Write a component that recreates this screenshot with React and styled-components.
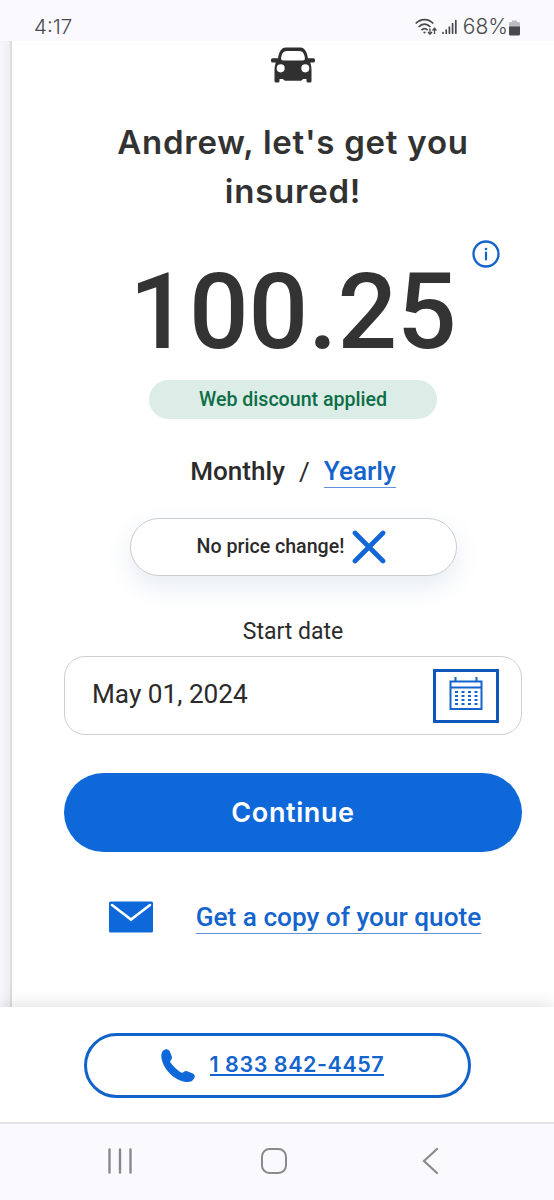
// App.jsx

import React from 'react';
import styled, { createGlobalStyle } from 'styled-components';

const GlobalStyle = createGlobalStyle`
  * { box-sizing: border-box; }
  body {
    margin: 0;
    background: #fff;
    font-family: Roboto, sans-serif;
    color: #2b2b2b;
  }
`;

const Screen = styled.div`
  display: flex;
  flex-direction: column;
  width: 554px;
  height: 1200px;
  overflow: hidden;
  background: #fff;
`;

const StatusBar = styled.header`
  flex: 0 0 41px;
  display: flex;
  justify-content: space-between;
  align-items: flex-start;
  padding: 14px 34px 0 34px;
  background: #f9f9fe;
  color: #4a4a4c;
  font-size: 20.5px;
  line-height: 26px;
`;

const Clock = styled.span`
  font-family: Inter, sans-serif;
  font-weight: 300;
`;

const StatusIcons = styled.div`
  display: flex;
  align-items: center;
  gap: 5px;
`;

const Percent = styled.span`
  font-family: Inter, sans-serif;
  font-size: 21px;
  font-weight: 300;
  margin: 0 -4px 0 1px;
`;

const Main = styled.div`
  flex: 0 0 966px;
  display: flex;
`;

const Gutter = styled.div`
  flex: 0 0 12px;
  background: linear-gradient(90deg, #f6f7fb, #eeeff3);
  border-right: 2px solid #dcdcde;
`;

const Quote = styled.main`
  flex: 1;
  display: flex;
  flex-direction: column;
  align-items: center;
  padding: 6px 32px 0 52px;
`;

const Title = styled.h1`
  margin: 35px 0 0;
  font-family: Inter, sans-serif;
  font-size: 33px;
  font-weight: 600;
  letter-spacing: 0.75px;
  line-height: 49px;
  text-align: center;
  color: #323232;
`;

const PriceRow = styled.div`
  position: relative;
  align-self: stretch;
  height: 112px;
  margin-top: 41px;
  text-align: center;
`;

const Price = styled.div`
  font-size: 105px;
  font-weight: 500;
  line-height: 112px;
  color: #333;
`;

const InfoIcon = styled.svg`
  position: absolute;
  top: -17px;
  right: 22px;
`;

const Discount = styled.div`
  width: 288px;
  height: 39px;
  margin-top: 11px;
  border-radius: 20px;
  background: #dcece7;
  color: #0d6e47;
  font-size: 19.6px;
  font-weight: 500;
  line-height: 39px;
  text-align: center;
`;

const Period = styled.div`
  display: flex;
  gap: 14px;
  margin-top: 36px;
  font-size: 26.1px;
  line-height: 32px;
`;

const Medium = styled.span`
  font-weight: 500;
`;

const Link = styled.a`
  height: 33px;
  border-bottom: 1px solid #5f93dc;
  color: #1464cd;
  font-size: 26.2px;
  font-weight: 500;
  line-height: 32px;
`;

const Notice = styled.div`
  display: flex;
  align-items: center;
  justify-content: center;
  gap: 8px;
  width: 327px;
  height: 58px;
  margin-top: 30px;
  padding-right: 3px;
  border: 1px solid #cdcdd0;
  border-radius: 29px;
  background: #fff;
  box-shadow: 0 10px 26px rgba(40, 95, 150, 0.12);
  font-size: 19.6px;
  font-weight: 500;
`;

const NoticeText = styled.span`
  padding-bottom: 1px;
`;

const Label = styled.label`
  margin-top: 42px;
  font-size: 23px;
  line-height: 28px;
`;

const DateField = styled.div`
  align-self: stretch;
  display: flex;
  align-items: center;
  justify-content: space-between;
  height: 79px;
  margin-top: 10px;
  padding: 0 22px 0 27px;
  border: 1px solid #cfcfcf;
  border-radius: 21px;
`;

const DateValue = styled.span`
  padding-bottom: 4px;
  font-size: 26.2px;
`;

const CalendarButton = styled.button`
  display: flex;
  align-items: flex-start;
  justify-content: center;
  width: 66px;
  height: 54px;
  padding: 5px 0 0;
  border: 3px solid #0f57b8;
  background: #fff;
`;

const Continue = styled.button`
  align-self: stretch;
  height: 79px;
  margin-top: 38px;
  padding: 0;
  border: none;
  border-radius: 40px;
  background: #0f68d9;
  color: #fff;
  font-family: Inter, sans-serif;
  font-size: 27px;
  font-weight: 600;
  letter-spacing: 0.6px;
`;

const CopyRow = styled.div`
  display: flex;
  gap: 43px;
  margin: 49px 0 0 4px;
`;

const CallBar = styled.section`
  flex: 0 0 115px;
  display: flex;
  justify-content: center;
  align-items: flex-start;
  padding: 26px 0 0;
  background: #fff;
  box-shadow: 0 -2px 16px rgba(0, 0, 0, 0.12);
`;

const CallButton = styled.a`
  display: flex;
  gap: 15px;
  width: 387px;
  height: 65px;
  padding: 13px 0 0 74px;
  border: 3px solid #1263c9;
  border-radius: 33px;
  color: #1464cd;
`;

const PhoneNumber = styled.span`
  height: 27px;
  border-bottom: 2px solid #1464cd;
  font-family: Inter, sans-serif;
  font-size: 21.5px;
  font-weight: 600;
  letter-spacing: 0.55px;
  line-height: 30px;
`;

const NavBar = styled.nav`
  flex: 1;
  display: flex;
  align-items: center;
  justify-content: space-between;
  padding: 0 115px 2px 107px;
  border-top: 2px solid #e2e2e8;
  background: #f9f9fe;
`;

const HomeIcon = styled.svg`
  margin-right: 7px;
`;

const CarIcon = () => (
  <svg width="44" height="36" viewBox="0 0 44 35" fill="#303030" preserveAspectRatio="none">
    <path
      fillRule="evenodd"
      d="M14.500.5h15c4 0 6.500 4 7.500 10.500h5.500a1.500 1.500 0 0 1 1.500 1.500v1a1.500 1.500 0 0 1-1.500 1.500h-3.300c1 2.500 1.300 5 1.300 8v10a1.500 1.500 0 0 1-1.500 1.500h-2a1.500 1.500 0 0 1-1.500-1.500V31h-3.500c-1 1.500-2 1.700-3.500 1.700h-13c-1.500 0-2.500-.2-3.500-1.700H8.500v2A1.500 1.500 0 0 1 7 34.500H5A1.500 1.500 0 0 1 3.500 33V23c0-3 .3-5.500 1.300-8H1.500A1.500 1.500 0 0 1 0 13.500v-1A1.500 1.500 0 0 1 1.500 11H7C8 4.500 10.500.5 14.500.5zM15.500 4C12.500 4 11 6 10.200 10c-.4 2 .2 3.200 2.200 3.200h19.200c2 0 2.600-1.200 2.200-3.200C33 6 31.500 4 28.500 4zM9.700 16.700a4 4 0 1 0 0 8 4 4 0 0 0 0-8zm24.600 0a4 4 0 1 0 0 8 4 4 0 0 0 0-8z"
    />
  </svg>
);

const WifiIcon = () => (
  <svg width="22" height="18" viewBox="0 0 22 18" fill="none" stroke="#4a4a4c" strokeWidth="1.7">
    <path d="M.7 5.500C5.500.2 13.500.2 18.300 5.500M3.600 9C7 5.200 12 5.200 15.400 9M6.400 12.200c2-2 4.200-2 6.200 0" />
    <circle cx="9.500" cy="14.500" r="1.100" fill="#4a4a4c" stroke="none" />
    <path d="M15 10.500v5.500m-2-2 2 2.200 2-2.200M19.500 16v-5.500m-2 2 2-2.200 2 2.200" strokeWidth="1.300" />
  </svg>
);

const SignalIcon = () => (
  <svg width="15" height="18" viewBox="0 0 15 18" fill="none" stroke="#4a4a4c" strokeWidth="1.700" strokeLinecap="round">
    <path d="M1 14.500v.7M4.200 12v3.200M7.400 9v6.200M10.600 5.500v9.700M13.800 2.500v12.700" />
  </svg>
);

const BatteryIcon = () => (
  <svg width="11" height="17" viewBox="0 0 11 17">
    <path d="M3 1.500h5V3h1.500A1.500 1.500 0 0 1 11 4.500V8H0V4.500A1.500 1.500 0 0 1 1.500 3H3z" fill="#bcbcc0" />
    <path d="M0 7.500h11V15a1.500 1.500 0 0 1-1.500 1.500h-8A1.500 1.500 0 0 1 0 15z" fill="#4a4a4c" />
  </svg>
);

const CalendarIcon = () => (
  <svg width="34" height="34" viewBox="0 0 34 34" fill="none" stroke="#1464cd" strokeWidth="2">
    <path d="M1.500 4.500h31V32h-31zM1.500 10.500h31M6.500 0v5M27.500 0v5" />
    {[15, 19, 23, 27].map((y) => (
      <path key={y} d={`M6 ${y}h23`} strokeDasharray="3 3.500" />
    ))}
  </svg>
);

const App = () => {
  return (
    <Screen>
      <GlobalStyle />
      <StatusBar>
        <Clock>4:17</Clock>
        <StatusIcons>
          <WifiIcon />
          <SignalIcon />
          <Percent>68%</Percent>
          <BatteryIcon />
        </StatusIcons>
      </StatusBar>
      <Main>
        <Gutter />
        <Quote>
          <CarIcon />
          <Title>
            Andrew, let's get you
            <br />
            insured!
          </Title>
          <PriceRow>
            <Price>100.25</Price>
            <InfoIcon width="28" height="28" viewBox="0 0 28 28" fill="none" stroke="#1464cd">
              <circle cx="14" cy="14" r="12.500" strokeWidth="2.300" />
              <path d="M14 12.500v7" strokeWidth="2.200" strokeLinecap="round" />
              <circle cx="14" cy="9" r="1.300" fill="#1464cd" stroke="none" />
            </InfoIcon>
          </PriceRow>
          <Discount>Web discount applied</Discount>
          <Period>
            <Medium>Monthly</Medium>
            <span>/</span>
            <Link>Yearly</Link>
          </Period>
          <Notice>
            <NoticeText>No price change!</NoticeText>
            <svg width="34" height="34" viewBox="0 0 34 34" stroke="#1267d6" strokeWidth="4.700" strokeLinecap="round">
              <path d="M3 3l28 28M31 3L3 31" />
            </svg>
          </Notice>
          <Label>Start date</Label>
          <DateField>
            <DateValue>May 01, 2024</DateValue>
            <CalendarButton>
              <CalendarIcon />
            </CalendarButton>
          </DateField>
          <Continue>Continue</Continue>
          <CopyRow>
            <svg width="44" height="32" viewBox="0 0 44 32">
              <rect width="44" height="31" y="0.500" rx="1.500" fill="#0f68d9" />
              <path d="M3 4l19 14.500L41 4" fill="none" stroke="#fff" strokeWidth="2.600" strokeLinecap="round" />
            </svg>
            <Link>Get a copy of your quote</Link>
          </CopyRow>
        </Quote>
      </Main>
      <CallBar>
        <CallButton>
          <svg width="34" height="34" viewBox="0 0 34 34" fill="#0f68d9">
            <path d="M4 .5c2.500-.8 4 .3 5 2.500l1.800 4.600c.5 1.700 0 2.800-1 3.700-.8.900-.8 1.700 0 2.700 3 3.900 6.200 6.800 10.200 9.400 1.200.7 1.900.5 2.700-.3 1-1 2-1.300 3.500-.8l5 1.900c2.300.9 3 2.600 2.300 4.600-1.200 3.200-4.500 4.700-8 4.200C13 31.500 2 20 .4 8.400 0 4.600 1 1.500 4 .5z" />
          </svg>
          <PhoneNumber>1 833 842-4457</PhoneNumber>
        </CallButton>
      </CallBar>
      <NavBar>
        <svg width="26" height="28" viewBox="0 0 26 28" stroke="#8a8a8c" strokeWidth="2.400" strokeLinecap="round">
          <path d="M2.500 2.500v23M13 2.500v23M23.500 2.500v23" />
        </svg>
        <HomeIcon width="28" height="28" viewBox="0 0 28 28" fill="none" stroke="#8a8a8c" strokeWidth="2">
          <rect x="2" y="2" width="24" height="24" rx="7.500" />
        </HomeIcon>
        <svg width="17" height="28" viewBox="0 0 17 28" fill="none" stroke="#8a8a8c" strokeWidth="2.200" strokeLinecap="round">
          <path d="M15 2L2 14l13 12" />
        </svg>
      </NavBar>
    </Screen>
  );
};

export default App;
